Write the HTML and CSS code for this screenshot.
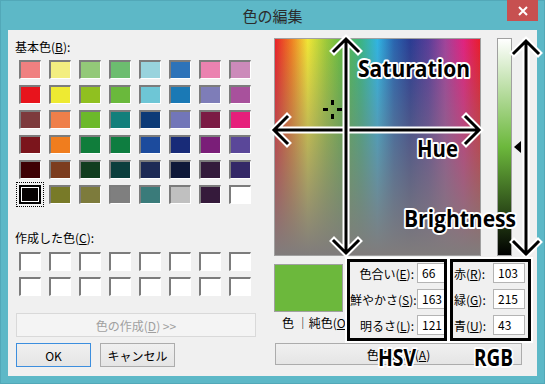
FILE: index.html
```html
<!DOCTYPE html>
<html lang="ja">
<head>
  <meta charset="UTF-8">
  <title>色の編集</title>
  <link rel="stylesheet" href="styles.css">
</head>
<body>
  <div class="window">
    <div class="titlebar">
      <span class="title">色の編集</span>
      <div class="close">
        <svg width="10" height="10" viewBox="0 0 10 10"><path d="M1 1L9 9M9 1L1 9" stroke="#fff" stroke-width="2"/></svg>
      </div>
    </div>

    <div class="client">
      <div class="left">
        <div class="caption">基本色(<u>B</u>):</div>
        <div class="swatches" id="basic"></div>

        <div class="caption custom-caption">作成した色(<u>C</u>):</div>
        <div class="swatches custom" id="custom"></div>

        <button class="btn btn-define" disabled>色の作成(<u>D</u>) &gt;&gt;</button>
        <div class="btn-row">
          <button class="btn btn-default">OK</button>
          <button class="btn">キャンセル</button>
        </div>
      </div>

      <div class="right">
        <div class="top-row">
          <div class="spectrum"></div>
          <div class="lum"></div>
          <div class="pointer"></div>
        </div>

        <div class="bottom-row">
          <div class="preview-col">
            <div class="preview"></div>
            <div class="solid-label">色 ｜純色(<u>O</u>)</div>
          </div>
          <div class="group hsv">
            <label>色合い(<u>E</u>):</label><div class="field">66</div>
            <label>鮮やかさ(<u>S</u>):</label><div class="field">163</div>
            <label>明るさ(<u>L</u>):</label><div class="field">121</div>
          </div>
          <div class="group rgb">
            <label>赤(<u>R</u>):</label><div class="field">103</div>
            <label>緑(<u>G</u>):</label><div class="field">215</div>
            <label>青(<u>U</u>):</label><div class="field">43</div>
          </div>
        </div>

        <button class="btn btn-add">色の追加(<u>A</u>)</button>
      </div>
    </div>

    <!-- annotations drawn over the dialog -->
    <svg class="notes" width="545" height="384" viewBox="0 0 545 384">
      <g fill="#000">
        <rect x="331" y="100" width="3" height="5"/>
        <rect x="331" y="114" width="3" height="5"/>
        <rect x="323" y="108" width="5" height="3"/>
        <rect x="337" y="108" width="5" height="3"/>
      </g>
      <g fill="none" stroke-linecap="square" stroke-linejoin="miter">
        <g stroke="#fff" stroke-width="7">
          <path d="M276 130H477M287 117L274 130L287 143M466 117L479 130L466 143"/>
        </g>
        <g stroke="#000" stroke-width="3">
          <path d="M276 130H477M287 117L274 130L287 143M466 117L479 130L466 143"/>
        </g>
        <g stroke="#fff" stroke-width="7">
          <path d="M346 40V251M334 51L346 39L358 51M334 241L346 253L358 241"/>
          <path d="M526 42V252M514 53L526 41L538 53M514 242L526 254L538 242"/>
        </g>
        <g stroke="#000" stroke-width="3">
          <path d="M346 40V251M334 51L346 39L358 51M334 241L346 253L358 241"/>
          <path d="M526 42V252M514 53L526 41L538 53M514 242L526 254L538 242"/>
        </g>
      </g>
      <g class="note-text">
        <text x="358" y="77" font-size="23" textLength="112" lengthAdjust="spacingAndGlyphs">Saturation</text>
        <text x="417" y="157" font-size="23" textLength="41" lengthAdjust="spacingAndGlyphs">Hue</text>
        <text x="404" y="227" font-size="23" textLength="112" lengthAdjust="spacingAndGlyphs">Brightness</text>
        <text x="378" y="366" font-size="24" textLength="38" lengthAdjust="spacingAndGlyphs">HSV</text>
        <text x="474" y="366" font-size="24" textLength="39" lengthAdjust="spacingAndGlyphs">RGB</text>
      </g>
    </svg>
  </div>

  <script>
    const basicColors = [
      "#f08080", "#f3ee80", "#93c978", "#6cbd6f", "#98d3dd", "#2d73b9", "#eb82b0", "#cc8aba",
      "#e8141c", "#eeea32", "#90c020", "#6ab93c", "#6ec6d6", "#1a79b5", "#7e7db8", "#a8519c",
      "#7d3a3c", "#ef7f4a", "#6cb92a", "#127f7b", "#0c3a77", "#7276b8", "#7b1a44", "#e61f7b",
      "#7b151c", "#f07d1e", "#107d3b", "#0e7d40", "#1c4b9d", "#182b78", "#7a1e78", "#5a4799",
      "#3e0004", "#7c3c1e", "#113d1f", "#0b3e3d", "#1d2a55", "#0e1838", "#331a3b", "#342867",
      "#070303", "#787a28", "#7d7b3c", "#7f7f7f", "#3a7b7a", "#c0c0c0", "#351a3b", "#ffffff"
    ];

    const basic = document.getElementById("basic");
    basicColors.forEach(function (c, i) {
      const sw = document.createElement("div");
      sw.className = i === 40 ? "sw sel" : "sw";
      sw.style.background = c;
      basic.appendChild(sw);
    });

    const custom = document.getElementById("custom");
    for (let i = 0; i < 16; i++) {
      const sw = document.createElement("div");
      sw.className = "sw empty";
      custom.appendChild(sw);
    }
  </script>
</body>
</html>
```

FILE: styles.css
```css
* {
  box-sizing: border-box;
}
body {
  margin: 0;
  background: #5db8c7;
  font-family: "Noto Sans CJK JP", sans-serif;
  font-size: 12px;
  color: #000;
}
u {
  text-decoration-thickness: 1px;
  text-underline-offset: 1px;
}
.window {
  position: relative;
  width: 545px;
  height: 384px;
  background: #5db8c7;
  box-shadow: inset 0 0 0 1px #52a8b8;
}
.titlebar {
  position: relative;
  height: 30px;
  text-align: center;
}
.title {
  font-size: 15px;
  line-height: 31px;
  color: #2b2b2b;
}
.close {
  position: absolute;
  top: 0;
  right: 7px;
  width: 31px;
  height: 21px;
  background: #c75050;
  display: flex;
  align-items: center;
  justify-content: center;
}
.client {
  display: flex;
  height: 346px;
  margin: 0 8px;
  background: #f0f0f0;
}

/* left side */
.left {
  width: 266px;
  padding: 9px 0 0 7px;
}
.caption {
  line-height: 16px;
}
.custom-caption {
  margin-top: 26px;
}
.swatches {
  display: grid;
  grid-template-columns: repeat(8, 22px);
  grid-auto-rows: 19px;
  column-gap: 8px;
  row-gap: 6px;
  margin: 5px 0 0 4px;
}
.swatches.custom {
  margin-top: 6px;
}
.sw {
  border-style: solid;
  border-width: 2px 1px 1px 2px;
  border-color: #7c7c7c #fff #fff #7c7c7c;
}
.sw.empty {
  background: #fff;
}
.sw.sel {
  border: 2px solid #000;
  box-shadow: inset 0 0 0 1px #fff;
  outline: 1px dotted #000;
  outline-offset: 2px;
}
.btn {
  height: 24px;
  padding: 0;
  font-family: inherit;
  font-size: 12px;
  color: #000;
  background: linear-gradient(#f0f0f0, #e5e5e5);
  border: 1px solid #acacac;
}
.btn-define {
  display: block;
  width: 240px;
  margin: 17px 0 0 1px;
  color: #a0a0a0;
  background: #f4f4f4;
  border-color: #d9d9d9;
}
.btn-row {
  display: flex;
  gap: 9px;
  margin: 6px 0 0 1px;
}
.btn-row .btn {
  width: 75px;
}
.btn-default {
  border-color: #3c8ede;
}

/* right side */
.right {
  flex: 1;
  padding-top: 8px;
}
.top-row {
  display: flex;
}
.spectrum {
  width: 207px;
  height: 218px;
  border: 1px solid #a0a0a0;
  background:
    linear-gradient(rgba(128, 124, 124, 0), #807c7c),
    linear-gradient(to right, #e8202a, #ef7e22 8%, #f0e636 16%, #9cc93a 25%, #5db845 33%,
      #3bb485 42%, #31b4e2 50%, #2a66b0 58%, #2a3c92 66%, #5a3e98 75%, #a0449a 83%,
      #e0237f 92%, #e81d2c);
}
.lum {
  width: 15px;
  height: 218px;
  margin-left: 16px;
  border: 1px solid #a0a0a0;
  background: linear-gradient(#fff, #6cb83c 50%, #000);
}
.pointer {
  width: 0;
  height: 0;
  margin: 103px 0 0 2px;
  border-top: 6px solid transparent;
  border-bottom: 6px solid transparent;
  border-right: 7px solid #000;
}
.bottom-row {
  display: flex;
  height: 82px;
  margin-top: 3px;
}
.preview-col {
  width: 73px;
  padding-top: 5px;
  overflow: hidden;
}
.preview {
  width: 69px;
  height: 48px;
  border: 1px solid #a0a0a0;
  background: #6cb83c;
}
.solid-label {
  margin-top: 3px;
  padding-left: 8px;
  line-height: 16px;
  white-space: nowrap;
}
.group {
  display: grid;
  grid-auto-rows: 20px;
  row-gap: 6px;
  column-gap: 3px;
  align-items: center;
  padding-top: 1px;
  border: 3px solid #000;
  box-shadow: 0 0 0 2px #fff;
  overflow: hidden;
}
.hsv {
  width: 100px;
  grid-template-columns: 64px 36px;
}
.hsv label {
  text-align: right;
  white-space: nowrap;
}
.rgb {
  width: 81px;
  margin-left: 3px;
  grid-template-columns: 37px 32px;
}
.rgb label {
  padding-left: 1px;
  white-space: nowrap;
}
.field {
  height: 20px;
  padding-left: 4px;
  line-height: 18px;
  background: #fff;
  border: 1px solid #b4b4b4;
}
.btn-add {
  display: block;
  width: 247px;
  height: 22px;
  margin: 2px 0 0 1px;
}

/* annotations */
.notes {
  position: absolute;
  left: 0;
  top: 0;
  pointer-events: none;
}
.note-text text {
  font-family: "Open Sans", sans-serif;
  font-weight: 700;
  fill: #000;
  stroke: #fff;
  stroke-width: 4px;
  stroke-linejoin: round;
  paint-order: stroke;
}
```
